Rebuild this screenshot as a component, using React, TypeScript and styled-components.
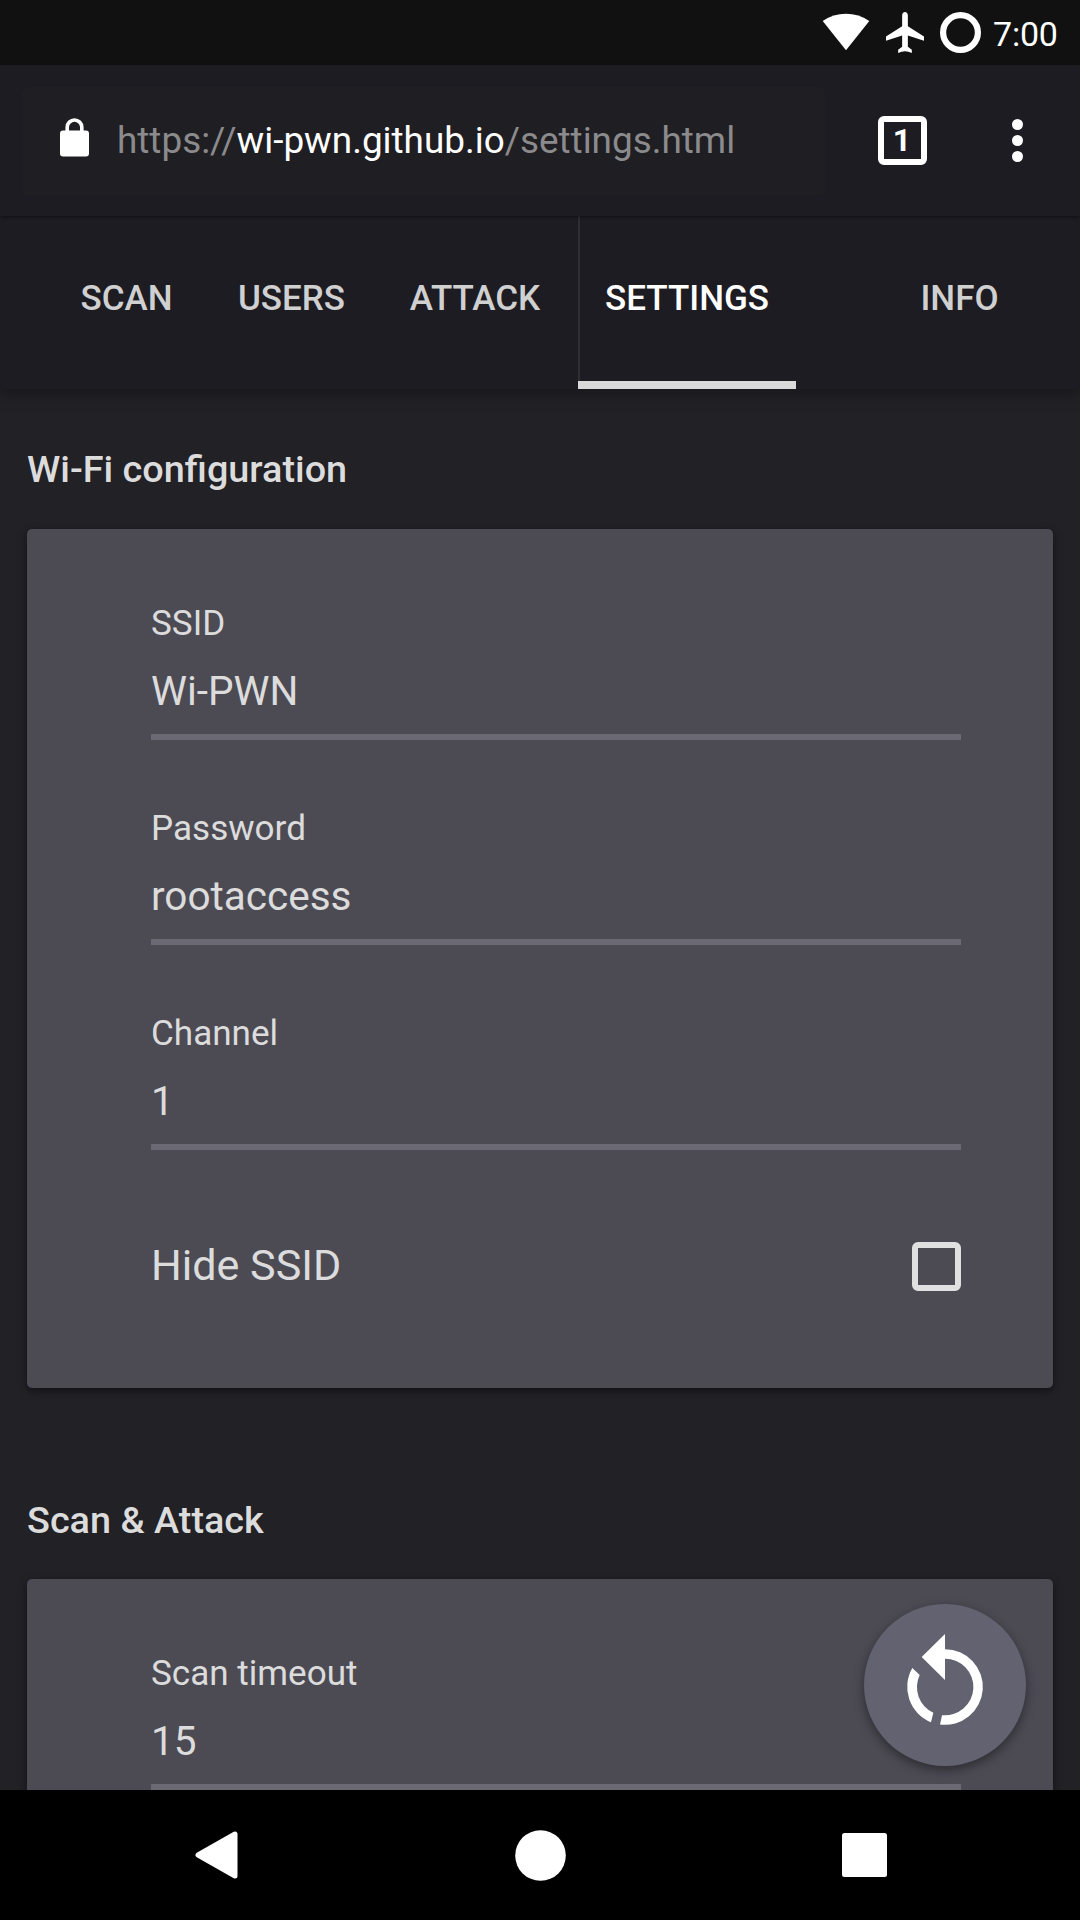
import React from 'react';
import styled, { createGlobalStyle } from 'styled-components';

const GlobalStyle = createGlobalStyle`
  * { box-sizing: border-box; }
  html, body { margin: 0; padding: 0; background: #000; }
  body { font-family: Roboto, "Noto Sans", sans-serif; }
`;

const Screen = styled.div`
  display: flex;
  flex-direction: column;
  width: 1080px;
  height: 1920px;
  overflow: hidden;
  background: #222126;
  color: #dcdcdc;
`;

const StatusBar = styled.header`
  flex: none;
  display: flex;
  justify-content: flex-end;
  align-items: flex-start;
  height: 65px;
  padding: 12px 22px 0 0;
  background: #111112;
`;

const StatusIcon = styled.svg<{ $gap: number }>`
  flex: none;
  display: block;
  margin-right: ${(p) => p.$gap}px;
`;

const Clock = styled.span`
  width: 65px;
  margin-top: 2px;
  font-size: 34px;
  letter-spacing: -0.2px;
  line-height: 40px;
  color: #fff;
  white-space: nowrap;
`;

const BrowserBar = styled.div`
  position: relative;
  z-index: 2;
  flex: none;
  display: flex;
  align-items: center;
  height: 151px;
  padding: 0 57px 0 22px;
  background: #1d1c22;
  box-shadow: 0 1px 3px rgba(0, 0, 0, 0.45);
`;

const AddressBox = styled.div`
  display: flex;
  align-items: center;
  width: 803px;
  height: 108px;
  padding-left: 38px;
  border-radius: 5px;
  background: #1f1e22;
`;

const LockIcon = styled.svg`
  flex: none;
  margin-top: -6px;
`;

const Url = styled.span`
  margin-left: 28px;
  font-size: 36.88px;
  line-height: 44px;
  color: #8b8b8d;
  white-space: nowrap;
`;

const Host = styled.span`
  color: #fff;
`;

const TabCount = styled.button`
  display: flex;
  align-items: center;
  justify-content: center;
  width: 49px;
  height: 49px;
  margin: 0 0 0 53px;
  padding: 0 1px 2px 0;
  border: 6px solid #fff;
  border-radius: 6px;
  background: none;
  color: #fff;
  font: 700 32px/36px Roboto, sans-serif;
`;

const MenuDots = styled.div`
  display: flex;
  flex-direction: column;
  gap: 5px;
  margin-left: auto;
`;

const Dot = styled.i`
  width: 11px;
  height: 11px;
  border-radius: 50%;
  background: #fff;
`;

const TabBar = styled.nav`
  position: relative;
  z-index: 1;
  flex: none;
  display: grid;
  grid-template-columns: 48px 157px 173px 194px 6px 218px 44px 239px;
  height: 173px;
  background: #1d1c22;
  box-shadow: 0 3px 15px rgba(10, 10, 12, 0.5);
`;

const Tab = styled.a<{ $active?: boolean }>`
  display: flex;
  justify-content: center;
  padding-top: 62px;
  box-shadow: ${(p) => (p.$active ? 'inset 2px 0 0 #2e2e33' : 'none')};
  font-size: 35px;
  font-weight: 500;
  line-height: 42px;
  color: ${(p) => (p.$active ? '#fff' : '#d0d0d1')};
`;

const ActiveCell = styled.div`
  display: grid;
  grid-template-rows: 1fr 8px;
`;

const Indicator = styled.div`
  background: #dadada;
`;

const Content = styled.main`
  flex: 1;
  min-height: 0;
  overflow: hidden;
  padding: 57px 27px 0;
`;

const SectionTitle = styled.h2<{ $after: number }>`
  margin: 0 0 ${(p) => p.$after}px;
  font-size: 37.8px;
  font-weight: 500;
  line-height: 46px;
`;

const Card = styled.section`
  height: 859px;
  margin-bottom: 109px;
  padding: 74px 92px 0 124px;
  border-radius: 5px;
  background: #4c4b54;
  box-shadow: 0 3px 9px rgba(0, 0, 0, 0.5);
`;

const Field = styled.label`
  display: flex;
  flex-direction: column;
  height: 137px;
  margin-bottom: 68px;
  border-bottom: 6px solid #6a6974;
`;

const FieldLabel = styled.span`
  font-size: 35.1px;
  line-height: 40px;
  margin-bottom: 24px;
`;

const FieldValue = styled.span`
  font-size: 40.5px;
  line-height: 48px;
`;

const CheckRow = styled.label`
  display: flex;
  align-items: flex-start;
  justify-content: space-between;
  margin-top: 92px;
  font-size: 43.1px;
  line-height: 48px;
`;

const CheckBox = styled.span`
  width: 49px;
  height: 49px;
  border: 6px solid #e0e0e0;
  border-radius: 6px;
`;

const Fab = styled.button`
  position: absolute;
  left: 864px;
  top: 1604px;
  display: flex;
  align-items: center;
  justify-content: center;
  width: 162px;
  height: 162px;
  padding: 0;
  border: 0;
  border-radius: 50%;
  background: #636270;
  box-shadow: 0 4px 11px rgba(0, 0, 0, 0.42);
`;

const SystemBar = styled.footer`
  position: relative;
  flex: none;
  display: grid;
  grid-template-columns: 408px 264px 408px;
  align-items: center;
  height: 130px;
  background: #000;
`;

const SystemKey = styled.div<{ $pad?: string }>`
  display: flex;
  justify-content: center;
  padding: ${(p) => p.$pad ?? '0'};
`;

const fields = [
  ['SSID', 'Wi-PWN'],
  ['Password', 'rootaccess'],
  ['Channel', '1'],
];

export default function App() {
  return (
    <Screen>
      <GlobalStyle />
      <StatusBar>
        <StatusIcon $gap={16} width="48" height="40" viewBox="0 0 48 40">
          <path d="M0.7 9 A41 41 0 0 1 47.3 9 L24 38.3 Z" fill="#fff" />
        </StatusIcon>
        <StatusIcon $gap={16} width="38" height="41" viewBox="2 2 20 20" preserveAspectRatio="none">
          <path
            d="M22 16v-2l-8.5-5V3.5c0-.83-.67-1.5-1.5-1.5s-1.5.67-1.5 1.5V9L2 14v2l8.5-2.5V19L8.4 20.4V22Q12 20.4 15.6 22v-1.6L13.5 19v-5.5L22 16z"
            fill="#fff"
          />
        </StatusIcon>
        <StatusIcon $gap={12} width="41" height="41" viewBox="0 0 41 41">
          <circle cx="20.5" cy="20.5" r="17.4" fill="none" stroke="#fff" strokeWidth="6.2" />
        </StatusIcon>
        <Clock>7:00</Clock>
      </StatusBar>

      <BrowserBar>
        <AddressBox>
          <LockIcon width="29" height="39" viewBox="0 0 29 39">
            <rect x="0" y="12.5" width="29" height="26" rx="3" fill="#fff" />
            <path d="M7.2 14V9.3a7.3 7.3 0 0 1 14.6 0V14" fill="none" stroke="#fff" strokeWidth="3.6" />
          </LockIcon>
          <Url>
            https://<Host>wi-pwn.github.io</Host>/settings.html
          </Url>
        </AddressBox>
        <TabCount>1</TabCount>
        <MenuDots>
          <Dot />
          <Dot />
          <Dot />
        </MenuDots>
      </BrowserBar>

      <TabBar>
        <span />
        <Tab>SCAN</Tab>
        <Tab>USERS</Tab>
        <Tab>ATTACK</Tab>
        <span />
        <ActiveCell>
          <Tab $active>SETTINGS</Tab>
          <Indicator />
        </ActiveCell>
        <span />
        <Tab>INFO</Tab>
      </TabBar>

      <Content>
        <SectionTitle $after={37}>Wi-Fi configuration</SectionTitle>
        <Card>
          {fields.map(([label, value]) => (
            <Field key={label}>
              <FieldLabel>{label}</FieldLabel>
              <FieldValue>{value}</FieldValue>
            </Field>
          ))}
          <CheckRow>
            Hide SSID
            <CheckBox />
          </CheckRow>
        </Card>
        <SectionTitle $after={36}>Scan &amp; Attack</SectionTitle>
        <Card>
          <Field>
            <FieldLabel>Scan timeout</FieldLabel>
            <FieldValue>15</FieldValue>
          </Field>
        </Card>
      </Content>

      <Fab aria-label="Restore">
        <svg width="110" height="110" viewBox="-165 -171 330 330">
          <path
            d="M0 -159 L-70 -90 L0 -21 V-85 A85 85 0 1 1 -9 84.5 L-15 112.5 A113.5 113.5 0 1 0 0 -113.5 Z M-98 -57 A113.5 113.5 0 0 0 -42 105.5 L-35 77.5 A85 85 0 0 1 -76 -36 Z"
            fill="#fff"
          />
        </svg>
      </Fab>

      <SystemBar>
        <SystemKey $pad="0 0 0 25px">
          <svg width="43" height="48" viewBox="0 0 43 48">
            <path d="M3 24 L40 3 V45 Z" fill="#fff" stroke="#fff" strokeWidth="5" strokeLinejoin="round" />
          </svg>
        </SystemKey>
        <SystemKey>
          <svg width="51" height="51" viewBox="0 0 51 51">
            <circle cx="25.5" cy="25.5" r="25.3" fill="#fff" />
          </svg>
        </SystemKey>
        <SystemKey $pad="0 23px 0 0">
          <svg width="45" height="44" viewBox="0 0 45 44">
            <rect width="45" height="44" rx="2.5" fill="#fff" />
          </svg>
        </SystemKey>
      </SystemBar>
    </Screen>
  );
}
